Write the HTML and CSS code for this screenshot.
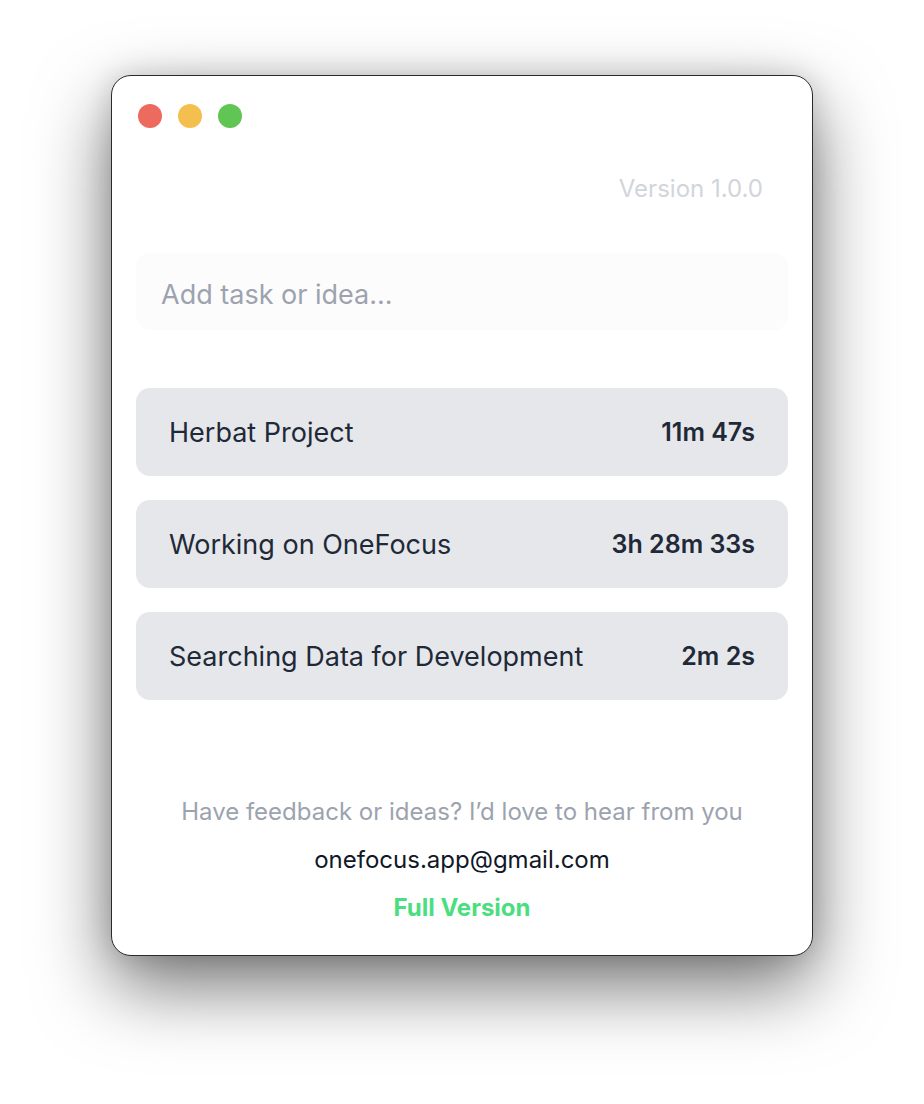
FILE: index.html
```html
<!DOCTYPE html>
<html lang="en">
<head>
<meta charset="utf-8">
<title>OneFocus</title>
<link rel="stylesheet" href="styles.css">
</head>
<body>
<div class="window">
  <div class="lights">
    <span class="light red"></span>
    <span class="light yellow"></span>
    <span class="light green"></span>
  </div>
  <div class="version">Version 1.0.0</div>
  <div class="input">Add task or idea...</div>
  <div class="tasks">
    <div class="task"><span class="task-name">Herbat Project</span><span class="task-time">11m 47s</span></div>
    <div class="task"><span class="task-name">Working on OneFocus</span><span class="task-time">3h 28m 33s</span></div>
    <div class="task"><span class="task-name">Searching Data for Development</span><span class="task-time">2m 2s</span></div>
  </div>
  <div class="footer">
    <div class="feedback">Have feedback or ideas? I’d love to hear from you</div>
    <div class="email">onefocus.app@gmail.com</div>
    <div class="full">Full Version</div>
  </div>
</div>
</body>
</html>
```
FILE: styles.css
```css
html, body {
  margin: 0;
  padding: 0;
  background: #ffffff;
}
body {
  font-family: Inter, "Noto Sans", "Liberation Sans", sans-serif;
  width: 924px;
  height: 1104px;
  overflow: hidden;
}
.window {
  box-sizing: border-box;
  width: 702px;
  height: 881px;
  margin: 75px 0 0 111px;
  border: 1px solid #2a2a2a;
  border-radius: 20px;
  background: #ffffff;
  box-shadow: 0 30px 75px rgba(0, 0, 0, 0.55), 0 0 28px rgba(0, 0, 0, 0.14);
  padding: 28px 24px 0 24px;
  display: flex;
  flex-direction: column;
}
.lights {
  display: flex;
  gap: 16px;
  margin-left: 2px;
}
.light {
  width: 24px;
  height: 24px;
  border-radius: 50%;
}
.red { background: #ed6a5e; }
.yellow { background: #f5bf4f; }
.green { background: #61c554; }
.version {
  margin-top: 49px;
  padding-right: 25px;
  text-align: right;
  font-size: 24px;
  line-height: 24px;
  color: #d1d5db;
}
.input {
  box-sizing: border-box;
  margin-top: 52px;
  height: 77px;
  border-radius: 14px;
  background: #fcfcfd;
  padding: 5px 0 0 25px;
  display: flex;
  align-items: center;
  font-size: 27px;
  color: #9ca3af;
}
.tasks {
  margin-top: 58px;
  display: flex;
  flex-direction: column;
  gap: 24px;
}
.task {
  height: 88px;
  border-radius: 14px;
  background: #e5e7eb;
  padding: 0 33px;
  display: flex;
  align-items: center;
  justify-content: space-between;
  color: #1f2937;
}
.task-name {
  font-size: 27px;
}
.task-time {
  font-size: 25px;
  font-weight: 600;
}
.footer {
  margin-top: 88px;
  text-align: center;
  font-size: 24px;
  line-height: 48px;
}
.feedback { color: #9ca3af; }
.email { color: #111827; }
.full { color: #4ade80; font-weight: 700; }
```
